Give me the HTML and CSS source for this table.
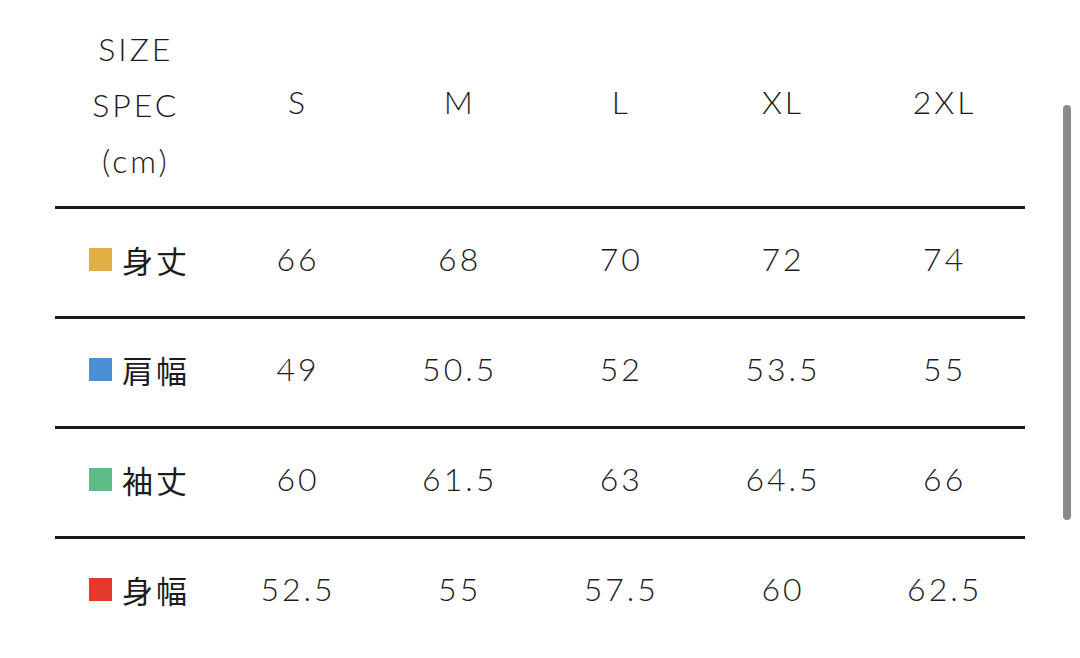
FILE: index.html
```html
<!DOCTYPE html>
<html lang="ja">
<head>
<meta charset="utf-8">
<title>Size spec</title>
<link rel="stylesheet" href="styles.css">
</head>
<body>
<div class="sheet">
  <div class="row head">
    <div class="cell label-head"><span>SIZE</span><span>SPEC</span><span>(cm)</span></div>
    <div class="cell">S</div>
    <div class="cell">M</div>
    <div class="cell">L</div>
    <div class="cell">XL</div>
    <div class="cell">2XL</div>
  </div>
  <div class="row data">
    <div class="cell label"><i class="sw gold"></i><span class="jp">身丈</span></div>
    <div class="cell">66</div><div class="cell">68</div><div class="cell">70</div><div class="cell">72</div><div class="cell">74</div>
  </div>
  <div class="row data">
    <div class="cell label"><i class="sw blue"></i><span class="jp">肩幅</span></div>
    <div class="cell">49</div><div class="cell">50.5</div><div class="cell">52</div><div class="cell">53.5</div><div class="cell">55</div>
  </div>
  <div class="row data">
    <div class="cell label"><i class="sw green"></i><span class="jp">袖丈</span></div>
    <div class="cell">60</div><div class="cell">61.5</div><div class="cell">63</div><div class="cell">64.5</div><div class="cell">66</div>
  </div>
  <div class="row data">
    <div class="cell label"><i class="sw red"></i><span class="jp">身幅</span></div>
    <div class="cell">52.5</div><div class="cell">55</div><div class="cell">57.5</div><div class="cell">60</div><div class="cell">62.5</div>
  </div>
</div>
<div class="scrollbar"></div>
</body>
</html>
```

FILE: styles.css
```css
html, body {
  margin: 0;
  padding: 0;
  background: #ffffff;
}
body {
  font-family: "Lato", "Noto Sans CJK JP", sans-serif;
  font-weight: 300;
  color: #1c1c1c;
  width: 1080px;
  height: 658px;
  overflow: hidden;
}
.sheet {
  margin-left: 55px;
  width: 970px;
}
.row {
  display: grid;
  grid-template-columns: repeat(6, 1fr);
}
.head {
  height: 206px;
}
.data {
  height: 107px;
  border-top: 3px solid #1a1a1a;
}
.cell {
  display: flex;
  align-items: center;
  justify-content: center;
  font-size: 32px;
  letter-spacing: 3px;
  padding-left: 1px;
  padding-bottom: 4px;
}
.data .cell {
  padding-bottom: 8px;
}
.label-head {
  flex-direction: column;
  line-height: 56px;
  font-size: 32px;
  padding-left: 0;
  padding-top: 4px;
  padding-bottom: 0;
}
.data .label {
  justify-content: flex-start;
  padding-left: 34px;
  padding-bottom: 6px;
  gap: 10px;
}
.jp {
  font-family: "Noto Sans CJK JP", sans-serif;
  font-weight: 400;
  font-size: 31px;
  letter-spacing: 3px;
}
.sw {
  display: block;
  width: 23px;
  height: 23px;
}
.gold { background: #dfae45; }
.blue { background: #4a8fd3; }
.green { background: #5fba86; }
.red { background: #e3382a; }
.scrollbar {
  position: fixed;
  left: 1063px;
  top: 105px;
  width: 8px;
  height: 415px;
  border-radius: 4px;
  background: #8a8a8a;
}
```
